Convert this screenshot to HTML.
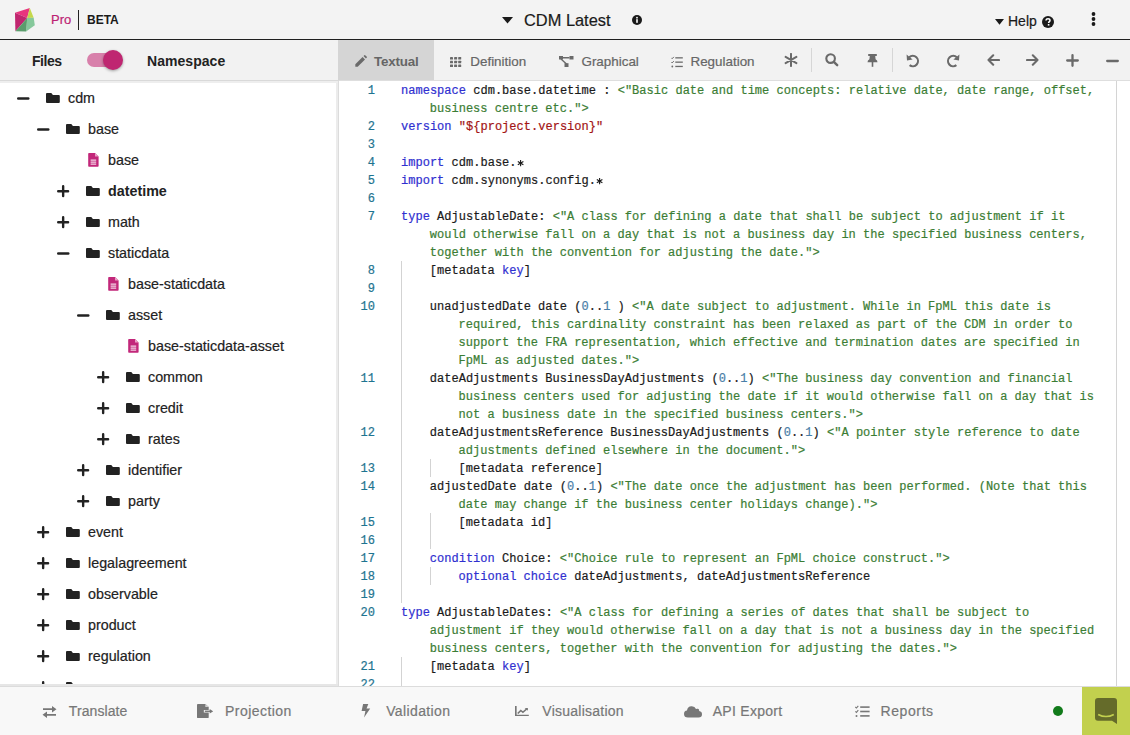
<!DOCTYPE html>
<html><head><meta charset="utf-8">
<style>
*{box-sizing:border-box;margin:0;padding:0}
html,body{width:1130px;height:735px;overflow:hidden;background:#f3f3f3;font-family:"Liberation Sans",sans-serif;color:#222}
.abs{position:absolute}
.t,.tx,.cr{-webkit-text-stroke:0.2px currentColor}
#hdr{position:absolute;left:0;top:0;width:1130px;height:40px;background:#f3f3f3;border-bottom:1px solid #1f1f1f}
.t{position:absolute;white-space:nowrap;line-height:1}
#left{position:absolute;left:0;top:40px;width:339px;height:646px;background:#fff}
#lbar{position:absolute;left:0;top:0;width:339px;height:41px;background:#f2f2f2;border-bottom:1px solid #d9d9d9}
#tree{position:absolute;left:0;top:41px;width:339px;height:605px;background:#fff;border-right:1px solid #dcdcdc;overflow:hidden}
#tree:before{content:"";position:absolute;right:0;top:0;width:2px;height:100%;background:#ececec;z-index:2}
#tree:after{content:"";position:absolute;left:0;bottom:0;width:100%;height:2px;background:#e6e6e6;z-index:2}
#ttop{position:absolute;left:0;top:0;width:100%;height:2px;background:#eeeeee;z-index:2}
.row{position:absolute;height:31px;left:0;width:330px}
.row .tx{position:absolute;top:7px;font-size:14.3px;line-height:17px;color:#222;white-space:nowrap}
#tabs{position:absolute;left:339px;top:40px;width:791px;height:41px;background:#f2f2f2;border-bottom:1px solid #dedede}
.tab{position:absolute;top:0;height:40px;color:#666}
.tab .tx{position:absolute;top:13.7px;font-size:13.4px;line-height:16px;white-space:nowrap}
#code{position:absolute;left:339px;top:81px;width:777px;height:605px;background:#fff;overflow:hidden;font-family:"Liberation Mono",monospace;font-size:12px;letter-spacing:0.02px}
#sb{position:absolute;left:1116px;top:81px;width:14px;height:605px;background:#fff;border-left:1px solid #d4d4d4}
.cr{position:absolute;left:0;width:777px;height:18px;line-height:18px;white-space:pre;color:#1a1a1a}
.ln{position:absolute;top:1px;right:741px;color:#1e7490;text-align:right}
.cd{position:absolute;top:1px;left:62px}
.g{position:absolute;top:0;width:1px;height:18px;background:#d3d3d3}
.k{color:#2f2fd0}.s{color:#3b7d34}.r{color:#a31515}.n{color:#4a7ea8}
#bot{position:absolute;left:0;top:686px;width:1130px;height:49px;background:#f8f8f8;border-top:1px solid #dcdcdc}
.bi{position:absolute;top:0;height:49px;color:#777}
.bi .tx{position:absolute;top:16.3px;font-size:14px;line-height:16px;white-space:nowrap}
</style></head><body>
<div id="hdr">
  <svg class="abs" style="left:0;top:0" width="40" height="40" viewBox="0 0 40 40">
    <polygon points="15,12.7 29.8,8.1 27.2,17.9" fill="#e8357e"/>
    <polygon points="15,12.7 27.2,17.9 15.4,31.2" fill="#c0266f"/>
    <polygon points="29.8,8.1 33.7,17.8 27.2,17.9" fill="#c5d84c"/>
    <polygon points="27.2,17.9 33.7,17.8 34.8,25.3 26.1,31.6" fill="#86c89b"/>
    <polygon points="15.4,31.2 27.2,17.9 26.1,31.6" fill="#5b9d6c"/>
  </svg>
  <div class="t" style="left:51px;top:13.3px;font-size:13px;color:#bd1f74">Pro</div>
  <div class="abs" style="left:78px;top:10px;width:1px;height:20px;background:#222"></div>
  <div class="t" style="left:87px;top:14px;font-size:12px;font-weight:bold;color:#1a1a1a;-webkit-text-stroke:0">BETA</div>
  <svg class="abs" style="left:502px;top:17px" width="11" height="7" viewBox="0 0 11 7"><polygon points="0,0 11,0 5.5,6.5" fill="#1a1a1a"/></svg>
  <div class="t" style="left:524px;top:12px;font-size:16.4px;color:#1a1a1a">CDM Latest</div>
  <svg class="abs" style="left:632px;top:15px" width="10" height="10" viewBox="0 0 10 10"><circle cx="5" cy="5" r="5" fill="#1a1a1a"/><rect x="4.2" y="4.2" width="1.6" height="3.6" fill="#fff"/><circle cx="5" cy="2.7" r="0.9" fill="#fff"/></svg>
  <svg class="abs" style="left:995px;top:18.5px" width="9" height="6" viewBox="0 0 9 6"><polygon points="0,0 9,0 4.5,5.8" fill="#1a1a1a"/></svg>
  <div class="t" style="left:1008px;top:14px;font-size:14px;color:#1a1a1a">Help</div>
  <svg class="abs" style="left:1042px;top:15.5px" width="12" height="12" viewBox="0 0 12 12"><circle cx="6" cy="6" r="6" fill="#1a1a1a"/><path d="M4,4.6 C4,3.3 5,2.7 6,2.7 C7.2,2.7 8,3.4 8,4.4 C8,5.6 6.6,5.7 6.6,6.9" stroke="#fff" stroke-width="1.5" fill="none"/><rect x="5.8" y="8" width="1.6" height="1.6" fill="#fff"/></svg>
  <svg class="abs" style="left:1091px;top:11px" width="6" height="16" viewBox="0 0 6 16"><circle cx="2.5" cy="3" r="1.9" fill="#1a1a1a"/><circle cx="2.5" cy="8" r="1.9" fill="#1a1a1a"/><circle cx="2.5" cy="13" r="1.9" fill="#1a1a1a"/></svg>
</div>

<div id="left">
  <div id="lbar">
    <div class="t" style="left:32px;top:13.5px;font-size:14px;font-weight:bold;color:#222;letter-spacing:-0.45px;-webkit-text-stroke:0">Files</div>
    <div class="abs" style="left:87px;top:13px;width:34px;height:14px;border-radius:7px;background:#d880ab"></div>
    <div class="abs" style="left:103px;top:10px;width:20px;height:20px;border-radius:50%;background:#bf2671;box-shadow:0 1px 3px rgba(0,0,0,.35)"></div>
    <div class="t" style="left:147px;top:13.5px;font-size:14px;font-weight:bold;color:#222;letter-spacing:0.05px;-webkit-text-stroke:0">Namespace</div>
  </div>
  <div id="tree"><div id="ttop"></div>
<div class="row" style="top:2px"><svg class="abs" style="left:17px;top:13.5px" width="13" height="3" viewBox="0 0 13 3"><path d="M1.2,1.5 H11.3" stroke="#222" stroke-width="2.4" stroke-linecap="round"/></svg><svg class="abs" style="left:46.3px;top:9.7px" width="14" height="10" viewBox="0 0 14 10"><path d="M1,0 H5.3 L6.9,1.9 H12.8 Q13.8,1.9 13.8,2.9 V9 Q13.8,10 12.8,10 H1 Q0,10 0,9 V1 Q0,0 1,0 Z" fill="#222"/></svg><div class="tx" style="left:68px">cdm</div></div>
<div class="row" style="top:33px"><svg class="abs" style="left:37px;top:13.5px" width="13" height="3" viewBox="0 0 13 3"><path d="M1.2,1.5 H11.3" stroke="#222" stroke-width="2.4" stroke-linecap="round"/></svg><svg class="abs" style="left:66.3px;top:9.7px" width="14" height="10" viewBox="0 0 14 10"><path d="M1,0 H5.3 L6.9,1.9 H12.8 Q13.8,1.9 13.8,2.9 V9 Q13.8,10 12.8,10 H1 Q0,10 0,9 V1 Q0,0 1,0 Z" fill="#222"/></svg><div class="tx" style="left:88px">base</div></div>
<div class="row" style="top:64px"><svg class="abs" style="left:88px;top:8px" width="11" height="14" viewBox="0 0 11 14"><path d="M1,0 H7 L10.6,3.6 V13 Q10.6,13.8 9.8,13.8 H1 Q0.2,13.8 0.2,13 V0.8 Q0.2,0 1,0 Z" fill="#c2277a"/><path d="M7,0 V3.6 H10.6" fill="#e9a0c4"/><rect x="2.6" y="6.6" width="5.6" height="1" fill="#fff"/><rect x="2.6" y="8.6" width="5.6" height="1" fill="#fff"/><rect x="2.6" y="10.6" width="5.6" height="1" fill="#fff"/></svg><div class="tx" style="left:108px">base</div></div>
<div class="row" style="top:95px"><svg class="abs" style="left:57px;top:8.8px" width="13" height="13" viewBox="0 0 13 13"><path d="M1.2,6.2 H11.1 M6.15,1.2 V11.1" stroke="#222" stroke-width="2.4" stroke-linecap="round"/></svg><svg class="abs" style="left:86.3px;top:9.7px" width="14" height="10" viewBox="0 0 14 10"><path d="M1,0 H5.3 L6.9,1.9 H12.8 Q13.8,1.9 13.8,2.9 V9 Q13.8,10 12.8,10 H1 Q0,10 0,9 V1 Q0,0 1,0 Z" fill="#222"/></svg><div class="tx" style="left:108px;font-weight:bold;-webkit-text-stroke:0">datetime</div></div>
<div class="row" style="top:126px"><svg class="abs" style="left:57px;top:8.8px" width="13" height="13" viewBox="0 0 13 13"><path d="M1.2,6.2 H11.1 M6.15,1.2 V11.1" stroke="#222" stroke-width="2.4" stroke-linecap="round"/></svg><svg class="abs" style="left:86.3px;top:9.7px" width="14" height="10" viewBox="0 0 14 10"><path d="M1,0 H5.3 L6.9,1.9 H12.8 Q13.8,1.9 13.8,2.9 V9 Q13.8,10 12.8,10 H1 Q0,10 0,9 V1 Q0,0 1,0 Z" fill="#222"/></svg><div class="tx" style="left:108px">math</div></div>
<div class="row" style="top:157px"><svg class="abs" style="left:57px;top:13.5px" width="13" height="3" viewBox="0 0 13 3"><path d="M1.2,1.5 H11.3" stroke="#222" stroke-width="2.4" stroke-linecap="round"/></svg><svg class="abs" style="left:86.3px;top:9.7px" width="14" height="10" viewBox="0 0 14 10"><path d="M1,0 H5.3 L6.9,1.9 H12.8 Q13.8,1.9 13.8,2.9 V9 Q13.8,10 12.8,10 H1 Q0,10 0,9 V1 Q0,0 1,0 Z" fill="#222"/></svg><div class="tx" style="left:108px">staticdata</div></div>
<div class="row" style="top:188px"><svg class="abs" style="left:108px;top:8px" width="11" height="14" viewBox="0 0 11 14"><path d="M1,0 H7 L10.6,3.6 V13 Q10.6,13.8 9.8,13.8 H1 Q0.2,13.8 0.2,13 V0.8 Q0.2,0 1,0 Z" fill="#c2277a"/><path d="M7,0 V3.6 H10.6" fill="#e9a0c4"/><rect x="2.6" y="6.6" width="5.6" height="1" fill="#fff"/><rect x="2.6" y="8.6" width="5.6" height="1" fill="#fff"/><rect x="2.6" y="10.6" width="5.6" height="1" fill="#fff"/></svg><div class="tx" style="left:128px">base-staticdata</div></div>
<div class="row" style="top:219px"><svg class="abs" style="left:77px;top:13.5px" width="13" height="3" viewBox="0 0 13 3"><path d="M1.2,1.5 H11.3" stroke="#222" stroke-width="2.4" stroke-linecap="round"/></svg><svg class="abs" style="left:106.3px;top:9.7px" width="14" height="10" viewBox="0 0 14 10"><path d="M1,0 H5.3 L6.9,1.9 H12.8 Q13.8,1.9 13.8,2.9 V9 Q13.8,10 12.8,10 H1 Q0,10 0,9 V1 Q0,0 1,0 Z" fill="#222"/></svg><div class="tx" style="left:128px">asset</div></div>
<div class="row" style="top:250px"><svg class="abs" style="left:128px;top:8px" width="11" height="14" viewBox="0 0 11 14"><path d="M1,0 H7 L10.6,3.6 V13 Q10.6,13.8 9.8,13.8 H1 Q0.2,13.8 0.2,13 V0.8 Q0.2,0 1,0 Z" fill="#c2277a"/><path d="M7,0 V3.6 H10.6" fill="#e9a0c4"/><rect x="2.6" y="6.6" width="5.6" height="1" fill="#fff"/><rect x="2.6" y="8.6" width="5.6" height="1" fill="#fff"/><rect x="2.6" y="10.6" width="5.6" height="1" fill="#fff"/></svg><div class="tx" style="left:148px">base-staticdata-asset</div></div>
<div class="row" style="top:281px"><svg class="abs" style="left:97px;top:8.8px" width="13" height="13" viewBox="0 0 13 13"><path d="M1.2,6.2 H11.1 M6.15,1.2 V11.1" stroke="#222" stroke-width="2.4" stroke-linecap="round"/></svg><svg class="abs" style="left:126.3px;top:9.7px" width="14" height="10" viewBox="0 0 14 10"><path d="M1,0 H5.3 L6.9,1.9 H12.8 Q13.8,1.9 13.8,2.9 V9 Q13.8,10 12.8,10 H1 Q0,10 0,9 V1 Q0,0 1,0 Z" fill="#222"/></svg><div class="tx" style="left:148px">common</div></div>
<div class="row" style="top:312px"><svg class="abs" style="left:97px;top:8.8px" width="13" height="13" viewBox="0 0 13 13"><path d="M1.2,6.2 H11.1 M6.15,1.2 V11.1" stroke="#222" stroke-width="2.4" stroke-linecap="round"/></svg><svg class="abs" style="left:126.3px;top:9.7px" width="14" height="10" viewBox="0 0 14 10"><path d="M1,0 H5.3 L6.9,1.9 H12.8 Q13.8,1.9 13.8,2.9 V9 Q13.8,10 12.8,10 H1 Q0,10 0,9 V1 Q0,0 1,0 Z" fill="#222"/></svg><div class="tx" style="left:148px">credit</div></div>
<div class="row" style="top:343px"><svg class="abs" style="left:97px;top:8.8px" width="13" height="13" viewBox="0 0 13 13"><path d="M1.2,6.2 H11.1 M6.15,1.2 V11.1" stroke="#222" stroke-width="2.4" stroke-linecap="round"/></svg><svg class="abs" style="left:126.3px;top:9.7px" width="14" height="10" viewBox="0 0 14 10"><path d="M1,0 H5.3 L6.9,1.9 H12.8 Q13.8,1.9 13.8,2.9 V9 Q13.8,10 12.8,10 H1 Q0,10 0,9 V1 Q0,0 1,0 Z" fill="#222"/></svg><div class="tx" style="left:148px">rates</div></div>
<div class="row" style="top:374px"><svg class="abs" style="left:77px;top:8.8px" width="13" height="13" viewBox="0 0 13 13"><path d="M1.2,6.2 H11.1 M6.15,1.2 V11.1" stroke="#222" stroke-width="2.4" stroke-linecap="round"/></svg><svg class="abs" style="left:106.3px;top:9.7px" width="14" height="10" viewBox="0 0 14 10"><path d="M1,0 H5.3 L6.9,1.9 H12.8 Q13.8,1.9 13.8,2.9 V9 Q13.8,10 12.8,10 H1 Q0,10 0,9 V1 Q0,0 1,0 Z" fill="#222"/></svg><div class="tx" style="left:128px">identifier</div></div>
<div class="row" style="top:405px"><svg class="abs" style="left:77px;top:8.8px" width="13" height="13" viewBox="0 0 13 13"><path d="M1.2,6.2 H11.1 M6.15,1.2 V11.1" stroke="#222" stroke-width="2.4" stroke-linecap="round"/></svg><svg class="abs" style="left:106.3px;top:9.7px" width="14" height="10" viewBox="0 0 14 10"><path d="M1,0 H5.3 L6.9,1.9 H12.8 Q13.8,1.9 13.8,2.9 V9 Q13.8,10 12.8,10 H1 Q0,10 0,9 V1 Q0,0 1,0 Z" fill="#222"/></svg><div class="tx" style="left:128px">party</div></div>
<div class="row" style="top:436px"><svg class="abs" style="left:37px;top:8.8px" width="13" height="13" viewBox="0 0 13 13"><path d="M1.2,6.2 H11.1 M6.15,1.2 V11.1" stroke="#222" stroke-width="2.4" stroke-linecap="round"/></svg><svg class="abs" style="left:66.3px;top:9.7px" width="14" height="10" viewBox="0 0 14 10"><path d="M1,0 H5.3 L6.9,1.9 H12.8 Q13.8,1.9 13.8,2.9 V9 Q13.8,10 12.8,10 H1 Q0,10 0,9 V1 Q0,0 1,0 Z" fill="#222"/></svg><div class="tx" style="left:88px">event</div></div>
<div class="row" style="top:467px"><svg class="abs" style="left:37px;top:8.8px" width="13" height="13" viewBox="0 0 13 13"><path d="M1.2,6.2 H11.1 M6.15,1.2 V11.1" stroke="#222" stroke-width="2.4" stroke-linecap="round"/></svg><svg class="abs" style="left:66.3px;top:9.7px" width="14" height="10" viewBox="0 0 14 10"><path d="M1,0 H5.3 L6.9,1.9 H12.8 Q13.8,1.9 13.8,2.9 V9 Q13.8,10 12.8,10 H1 Q0,10 0,9 V1 Q0,0 1,0 Z" fill="#222"/></svg><div class="tx" style="left:88px">legalagreement</div></div>
<div class="row" style="top:498px"><svg class="abs" style="left:37px;top:8.8px" width="13" height="13" viewBox="0 0 13 13"><path d="M1.2,6.2 H11.1 M6.15,1.2 V11.1" stroke="#222" stroke-width="2.4" stroke-linecap="round"/></svg><svg class="abs" style="left:66.3px;top:9.7px" width="14" height="10" viewBox="0 0 14 10"><path d="M1,0 H5.3 L6.9,1.9 H12.8 Q13.8,1.9 13.8,2.9 V9 Q13.8,10 12.8,10 H1 Q0,10 0,9 V1 Q0,0 1,0 Z" fill="#222"/></svg><div class="tx" style="left:88px">observable</div></div>
<div class="row" style="top:529px"><svg class="abs" style="left:37px;top:8.8px" width="13" height="13" viewBox="0 0 13 13"><path d="M1.2,6.2 H11.1 M6.15,1.2 V11.1" stroke="#222" stroke-width="2.4" stroke-linecap="round"/></svg><svg class="abs" style="left:66.3px;top:9.7px" width="14" height="10" viewBox="0 0 14 10"><path d="M1,0 H5.3 L6.9,1.9 H12.8 Q13.8,1.9 13.8,2.9 V9 Q13.8,10 12.8,10 H1 Q0,10 0,9 V1 Q0,0 1,0 Z" fill="#222"/></svg><div class="tx" style="left:88px">product</div></div>
<div class="row" style="top:560px"><svg class="abs" style="left:37px;top:8.8px" width="13" height="13" viewBox="0 0 13 13"><path d="M1.2,6.2 H11.1 M6.15,1.2 V11.1" stroke="#222" stroke-width="2.4" stroke-linecap="round"/></svg><svg class="abs" style="left:66.3px;top:9.7px" width="14" height="10" viewBox="0 0 14 10"><path d="M1,0 H5.3 L6.9,1.9 H12.8 Q13.8,1.9 13.8,2.9 V9 Q13.8,10 12.8,10 H1 Q0,10 0,9 V1 Q0,0 1,0 Z" fill="#222"/></svg><div class="tx" style="left:88px">regulation</div></div>
<div class="row" style="top:591px"><svg class="abs" style="left:37px;top:8.8px" width="13" height="13" viewBox="0 0 13 13"><path d="M1.2,6.2 H11.1 M6.15,1.2 V11.1" stroke="#222" stroke-width="2.4" stroke-linecap="round"/></svg><svg class="abs" style="left:66.3px;top:9.7px" width="14" height="10" viewBox="0 0 14 10"><path d="M1,0 H5.3 L6.9,1.9 H12.8 Q13.8,1.9 13.8,2.9 V9 Q13.8,10 12.8,10 H1 Q0,10 0,9 V1 Q0,0 1,0 Z" fill="#222"/></svg><div class="tx" style="left:88px">synonyms</div></div>
  </div>
</div>

<div id="tabs">
<div class="tab" style="left:-1px;width:96px;background:#d5d5d5"><div class="abs" style="left:17px;top:15px;line-height:0"><svg width="12" height="12" viewBox="0 0 12 12"><path d="M0.3,9.3 L7.6,2 L10,4.4 L2.7,11.7 H0.3 Z" fill="#6a6a6a"/><path d="M8.5,1.1 L9.4,0.2 Q9.8,-0.1 10.2,0.2 L11.8,1.8 Q12.1,2.2 11.8,2.6 L10.9,3.5 Z" fill="#6a6a6a"/></svg></div><div class="tx" style="left:36px;font-weight:bold;-webkit-text-stroke:0;letter-spacing:-0.2px">Textual</div></div>
<div class="tab" style="left:95px;width:100px"><div class="abs" style="left:15.5px;top:16.7px;line-height:0"><svg width="12" height="11" viewBox="0 0 12 11"><rect x="0" y="0" width="3.0" height="2.6" rx="0.4" fill="#6a6a6a"/><rect x="0" y="3.75" width="3.0" height="2.6" rx="0.4" fill="#6a6a6a"/><rect x="0" y="7.5" width="3.0" height="2.6" rx="0.4" fill="#6a6a6a"/><rect x="4.1" y="0" width="3.0" height="2.6" rx="0.4" fill="#6a6a6a"/><rect x="4.1" y="3.75" width="3.0" height="2.6" rx="0.4" fill="#6a6a6a"/><rect x="4.1" y="7.5" width="3.0" height="2.6" rx="0.4" fill="#6a6a6a"/><rect x="8.2" y="0" width="3.0" height="2.6" rx="0.4" fill="#6a6a6a"/><rect x="8.2" y="3.75" width="3.0" height="2.6" rx="0.4" fill="#6a6a6a"/><rect x="8.2" y="7.5" width="3.0" height="2.6" rx="0.4" fill="#6a6a6a"/></svg></div><div class="tx" style="left:36.3px">Definition</div></div>
<div class="tab" style="left:195px;width:110px"><div class="abs" style="left:25px;top:16px;line-height:0"><svg width="15" height="11" viewBox="0 0 15 11"><rect x="0" y="0" width="4" height="3.5" fill="#6a6a6a"/><rect x="10.5" y="0" width="4" height="3.5" fill="#6a6a6a"/><rect x="5.5" y="7.2" width="4" height="3.8" fill="#6a6a6a"/><path d="M3.5,1.8 H10.5 M2,3 L7.5,8" stroke="#6a6a6a" stroke-width="1.4"/></svg></div><div class="tx" style="left:47.5px">Graphical</div></div>
<div class="tab" style="left:305px;width:110px"><div class="abs" style="left:27px;top:15.5px;line-height:0"><svg width="12" height="12" viewBox="0 0 12 12"><path d="M0.3,1.8 L1.2,2.7 L2.8,0.9 M0.3,6 L1.2,6.9 L2.8,5.1" stroke="#6a6a6a" stroke-width="1" fill="none"/><circle cx="1.3" cy="10.5" r="0.9" fill="#6a6a6a"/><rect x="4.3" y="1.2" width="7.5" height="1.3" fill="#6a6a6a"/><rect x="4.3" y="5.5" width="7.5" height="1.3" fill="#6a6a6a"/><rect x="4.3" y="9.8" width="7.5" height="1.3" fill="#6a6a6a"/></svg></div><div class="tx" style="left:46.5px">Regulation</div></div>
<div class="abs" style="left:444.5px;top:13.4px;line-height:0"><svg width="14" height="14" viewBox="0 0 14 14"><path d="M7,0.9 V13.1 M1.6,3.9 L12.4,10.1 M12.4,3.9 L1.6,10.1" stroke="#6a6a6a" stroke-width="2" stroke-linecap="round"/></svg></div>
<div class="abs" style="left:485.5px;top:13.4px;line-height:0"><svg width="14" height="14" viewBox="0 0 14 14"><circle cx="5.6" cy="5.6" r="4.3" stroke="#6a6a6a" stroke-width="2.1" fill="none"/><path d="M8.8,8.8 L12.2,12.2" stroke="#6a6a6a" stroke-width="2.4" stroke-linecap="round"/></svg></div>
<div class="abs" style="left:527.5px;top:14px;line-height:0"><svg width="11" height="13" viewBox="0 0 11 13"><path d="M1.2,0 H9.8 V1.9 H8.2 L8.6,5.2 Q10.5,6.2 10.5,8.2 H0.5 Q0.5,6.2 2.4,5.2 L2.8,1.9 H1.2 Z" fill="#6a6a6a"/><rect x="4.7" y="8" width="1.6" height="4.8" fill="#6a6a6a"/></svg></div>
<div class="abs" style="left:566.5px;top:13.6px;line-height:0"><svg width="14" height="14" viewBox="0 0 14 14"><path d="M3.2,3.3 A5.2,5.2 0 1 1 3.6,11.2" stroke="#6a6a6a" stroke-width="2.1" fill="none"/><path d="M0.6,0.4 L1,6.4 L6.6,5.6 Z" fill="#6a6a6a"/></svg></div>
<div class="abs" style="left:606.5px;top:13.6px;line-height:0"><svg width="14" height="14" viewBox="0 0 14 14"><path d="M10.8,3.3 A5.2,5.2 0 1 0 10.4,11.2" stroke="#6a6a6a" stroke-width="2.1" fill="none"/><path d="M13.4,0.4 L13,6.4 L7.4,5.6 Z" fill="#6a6a6a"/></svg></div>
<div class="abs" style="left:647.5px;top:14.4px;line-height:0"><svg width="13" height="12" viewBox="0 0 13 12"><path d="M12,6 H2 M6.2,1.3 L1.5,6 L6.2,10.7" stroke="#6a6a6a" stroke-width="2.1" fill="none" stroke-linecap="round" stroke-linejoin="round"/></svg></div>
<div class="abs" style="left:687.2px;top:14.4px;line-height:0"><svg width="13" height="12" viewBox="0 0 13 12"><path d="M1,6 H11 M6.8,1.3 L11.5,6 L6.8,10.7" stroke="#6a6a6a" stroke-width="2.1" fill="none" stroke-linecap="round" stroke-linejoin="round"/></svg></div>
<div class="abs" style="left:727.2px;top:13.9px;line-height:0"><svg width="13" height="13" viewBox="0 0 13 13"><path d="M6.5,1.2 V11.8 M1.2,6.5 H11.8" stroke="#6a6a6a" stroke-width="2.3" stroke-linecap="round"/></svg></div>
<div class="abs" style="left:767.0px;top:18.4px;line-height:0"><svg width="13" height="4" viewBox="0 0 13 4"><path d="M1.2,2 H11.8" stroke="#6a6a6a" stroke-width="2.3" stroke-linecap="round"/></svg></div>
<div class="abs" style="left:472px;top:8px;width:1px;height:24px;background:#d6d6d6"></div>
<div class="abs" style="left:553px;top:8px;width:1px;height:24px;background:#d6d6d6"></div>
</div>

<div id="code">
<div class="cr" style="top:0px"><span class="ln">1</span><span class="cd" style="left:62.0px"><span class="k">namespace</span> cdm.base.datetime : <span class="s">&lt;"Basic date and time concepts: relative date, date range, offset,</span></span></div>
<div class="cr" style="top:18px"><span class="ln"></span><span class="cd" style="left:90.8px"><span class="s">business centre etc."&gt;</span></span></div>
<div class="cr" style="top:36px"><span class="ln">2</span><span class="cd" style="left:62.0px"><span class="k">version</span> <span class="r">"${project.version}"</span></span></div>
<div class="cr" style="top:54px"><span class="ln">3</span><span class="cd" style="left:62.0px"></span></div>
<div class="cr" style="top:72px"><span class="ln">4</span><span class="cd" style="left:62.0px"><span class="k">import</span> cdm.base.<svg style="position:absolute" width="7.2" height="18" viewBox="0 0 7.2 18"><path d="M3.6,5.9 V12.3 M0.8,7.5 L6.4,10.7 M6.4,7.5 L0.8,10.7" stroke="#1a1a1a" stroke-width="1.1"/></svg></span></div>
<div class="cr" style="top:90px"><span class="ln">5</span><span class="cd" style="left:62.0px"><span class="k">import</span> cdm.synonyms.config.<svg style="position:absolute" width="7.2" height="18" viewBox="0 0 7.2 18"><path d="M3.6,5.9 V12.3 M0.8,7.5 L6.4,10.7 M6.4,7.5 L0.8,10.7" stroke="#1a1a1a" stroke-width="1.1"/></svg></span></div>
<div class="cr" style="top:108px"><span class="ln">6</span><span class="cd" style="left:62.0px"></span></div>
<div class="cr" style="top:126px"><span class="ln">7</span><span class="cd" style="left:62.0px"><span class="k">type</span> AdjustableDate: <span class="s">&lt;"A class for defining a date that shall be subject to adjustment if it</span></span></div>
<div class="cr" style="top:144px"><span class="ln"></span><span class="cd" style="left:90.8px"><span class="s">would otherwise fall on a day that is not a business day in the specified business centers,</span></span></div>
<div class="cr" style="top:162px"><span class="ln"></span><span class="cd" style="left:90.8px"><span class="s">together with the convention for adjusting the date."&gt;</span></span></div>
<div class="cr" style="top:180px"><div class="g" style="left:62.0px"></div><span class="ln">8</span><span class="cd" style="left:90.8px">[metadata <span class="k">key</span>]</span></div>
<div class="cr" style="top:198px"><div class="g" style="left:62.0px"></div><span class="ln">9</span><span class="cd" style="left:62.0px"></span></div>
<div class="cr" style="top:216px"><div class="g" style="left:62.0px"></div><span class="ln">10</span><span class="cd" style="left:90.8px">unadjustedDate date (<span class="n">0</span>..<span class="n">1</span> ) <span class="s">&lt;"A date subject to adjustment. While in FpML this date is</span></span></div>
<div class="cr" style="top:234px"><div class="g" style="left:62.0px"></div><span class="ln"></span><span class="cd" style="left:119.6px"><span class="s">required, this cardinality constraint has been relaxed as part of the CDM in order to</span></span></div>
<div class="cr" style="top:252px"><div class="g" style="left:62.0px"></div><span class="ln"></span><span class="cd" style="left:119.6px"><span class="s">support the FRA representation, which effective and termination dates are specified in</span></span></div>
<div class="cr" style="top:270px"><div class="g" style="left:62.0px"></div><span class="ln"></span><span class="cd" style="left:119.6px"><span class="s">FpML as adjusted dates."&gt;</span></span></div>
<div class="cr" style="top:288px"><div class="g" style="left:62.0px"></div><span class="ln">11</span><span class="cd" style="left:90.8px">dateAdjustments BusinessDayAdjustments (<span class="n">0</span>..<span class="n">1</span>) <span class="s">&lt;"The business day convention and financial</span></span></div>
<div class="cr" style="top:306px"><div class="g" style="left:62.0px"></div><span class="ln"></span><span class="cd" style="left:119.6px"><span class="s">business centers used for adjusting the date if it would otherwise fall on a day that is</span></span></div>
<div class="cr" style="top:324px"><div class="g" style="left:62.0px"></div><span class="ln"></span><span class="cd" style="left:119.6px"><span class="s">not a business date in the specified business centers."&gt;</span></span></div>
<div class="cr" style="top:342px"><div class="g" style="left:62.0px"></div><span class="ln">12</span><span class="cd" style="left:90.8px">dateAdjustmentsReference BusinessDayAdjustments (<span class="n">0</span>..<span class="n">1</span>) <span class="s">&lt;"A pointer style reference to date</span></span></div>
<div class="cr" style="top:360px"><div class="g" style="left:62.0px"></div><span class="ln"></span><span class="cd" style="left:119.6px"><span class="s">adjustments defined elsewhere in the document."&gt;</span></span></div>
<div class="cr" style="top:378px"><div class="g" style="left:62.0px"></div><div class="g" style="left:90.8px"></div><span class="ln">13</span><span class="cd" style="left:119.6px">[metadata reference]</span></div>
<div class="cr" style="top:396px"><div class="g" style="left:62.0px"></div><span class="ln">14</span><span class="cd" style="left:90.8px">adjustedDate date (<span class="n">0</span>..<span class="n">1</span>) <span class="s">&lt;"The date once the adjustment has been performed. (Note that this</span></span></div>
<div class="cr" style="top:414px"><div class="g" style="left:62.0px"></div><span class="ln"></span><span class="cd" style="left:119.6px"><span class="s">date may change if the business center holidays change)."&gt;</span></span></div>
<div class="cr" style="top:432px"><div class="g" style="left:62.0px"></div><div class="g" style="left:90.8px"></div><span class="ln">15</span><span class="cd" style="left:119.6px">[metadata id]</span></div>
<div class="cr" style="top:450px"><div class="g" style="left:62.0px"></div><div class="g" style="left:90.8px"></div><span class="ln">16</span><span class="cd" style="left:62.0px"></span></div>
<div class="cr" style="top:468px"><div class="g" style="left:62.0px"></div><span class="ln">17</span><span class="cd" style="left:90.8px"><span class="k">condition</span> Choice: <span class="s">&lt;"Choice rule to represent an FpML choice construct."&gt;</span></span></div>
<div class="cr" style="top:486px"><div class="g" style="left:62.0px"></div><div class="g" style="left:90.8px"></div><span class="ln">18</span><span class="cd" style="left:119.6px"><span class="k">optional</span> <span class="k">choice</span> dateAdjustments, dateAdjustmentsReference</span></div>
<div class="cr" style="top:504px"><div class="g" style="left:62.0px"></div><span class="ln">19</span><span class="cd" style="left:62.0px"></span></div>
<div class="cr" style="top:522px"><span class="ln">20</span><span class="cd" style="left:62.0px"><span class="k">type</span> AdjustableDates: <span class="s">&lt;"A class for defining a series of dates that shall be subject to</span></span></div>
<div class="cr" style="top:540px"><span class="ln"></span><span class="cd" style="left:90.8px"><span class="s">adjustment if they would otherwise fall on a day that is not a business day in the specified</span></span></div>
<div class="cr" style="top:558px"><span class="ln"></span><span class="cd" style="left:90.8px"><span class="s">business centers, together with the convention for adjusting the dates."&gt;</span></span></div>
<div class="cr" style="top:576px"><div class="g" style="left:62.0px"></div><span class="ln">21</span><span class="cd" style="left:90.8px">[metadata <span class="k">key</span>]</span></div>
<div class="cr" style="top:594px"><div class="g" style="left:62.0px"></div><span class="ln">22</span><span class="cd" style="left:62.0px"></span></div>
</div>
<div id="sb"></div>

<div id="bot">
<div class="abs" style="left:42px;top:19px;line-height:0"><svg width="15" height="12" viewBox="0 0 15 12"><path d="M1,3.2 H12.5 M14,8.8 H2.5" stroke="#777" stroke-width="1.8"/><path d="M10,0 L14.5,3.2 L10,6.4 Z M5,5.6 L0.5,8.8 L5,12 Z" fill="#777"/></svg></div><div class="bi"><div class="tx" style="left:68.8px;letter-spacing:0.08px">Translate</div></div>
<div class="abs" style="left:196.5px;top:16.7px;line-height:0"><svg width="16.6" height="14.2" viewBox="0 0 17 16.6" preserveAspectRatio="none"><path d="M1,0 H8.5 L12,3.5 V7 H7 V10 H12 V15.5 Q12,16.5 11,16.5 H1 Q0,16.5 0,15.5 V1 Q0,0 1,0 Z" fill="#777"/><path d="M8.5,0 V3.5 H12" fill="#cfcfcf"/><path d="M13,5.8 L16.6,8.5 L13,11.2 Z" fill="#777"/><rect x="8" y="7.7" width="5.5" height="1.6" fill="#777"/></svg></div><div class="bi"><div class="tx" style="left:225px;letter-spacing:0.45px">Projection</div></div>
<div class="abs" style="left:361.4px;top:17.2px;line-height:0"><svg width="9.6" height="13.6" viewBox="0 0 10 17" preserveAspectRatio="none"><path d="M2.2,0 H7.6 L5.8,5.6 H9.6 L3.2,17 L4.6,8.8 H0.6 Z" fill="#777"/></svg></div><div class="bi"><div class="tx" style="left:386.2px;letter-spacing:0.38px">Validation</div></div>
<div class="abs" style="left:515px;top:19.1px;line-height:0"><svg width="13.8" height="10.2" viewBox="0 0 15 13" preserveAspectRatio="none"><path d="M0.9,0 V12.1 H15" stroke="#777" stroke-width="1.8" fill="none"/><path d="M3,9.5 L6.3,5.8 L8.6,8 L13,3.6" stroke="#777" stroke-width="1.8" fill="none"/><path d="M10.5,2.5 H14 V6 Z" fill="#777"/></svg></div><div class="bi"><div class="tx" style="left:542.3px;letter-spacing:0.25px">Visualisation</div></div>
<div class="abs" style="left:683.6px;top:17.6px;line-height:0"><svg width="18" height="13" viewBox="0 0 18 13"><path d="M4,12.5 Q0,12.5 0,9 Q0,6 3,5.6 Q3.4,1.4 7.5,1.2 Q10.8,1 12,4 Q13,3.4 14,3.8 Q15.4,4.4 15.2,6 Q18,6.6 18,9.2 Q18,12.5 14.5,12.5 Z" fill="#777"/></svg></div><div class="bi"><div class="tx" style="left:712.7px;letter-spacing:0.29px">API Export</div></div>
<div class="abs" style="left:854.5px;top:17.5px;line-height:0"><svg width="15" height="14" viewBox="0 0 15 14"><path d="M0.3,2 L1.4,3 L3.3,0.8 M0.3,6.4 L1.4,7.4 L3.3,5.2" stroke="#777" stroke-width="1.1" fill="none"/><circle cx="1.5" cy="11" r="1" fill="#777"/><rect x="5.2" y="1.3" width="9.4" height="1.6" fill="#777"/><rect x="5.2" y="5.7" width="9.4" height="1.6" fill="#777"/><rect x="5.2" y="10.1" width="9.4" height="1.6" fill="#777"/></svg></div><div class="bi"><div class="tx" style="left:880.5px;letter-spacing:0.6px">Reports</div></div>
<div class="abs" style="left:1053px;top:19.2px;width:10.2px;height:10.2px;border-radius:50%;background:#127b1b"></div>
<div class="abs" style="left:1082px;top:0px;width:48px;height:49px;background:#c2d04e"></div>
<svg class="abs" style="left:1095px;top:11px" width="23" height="27" viewBox="0 0 23 27"><path d="M3,0 H19 Q22,0 22,3 V26 L17,22.8 H3 Q0,22.8 0,19.8 V3 Q0,0 3,0 Z" fill="#656b2a"/><path d="M3.2,16.4 Q11,20.6 18.8,16.4" stroke="#c2d04e" stroke-width="1.7" fill="none"/></svg>
</div>
</body></html>
